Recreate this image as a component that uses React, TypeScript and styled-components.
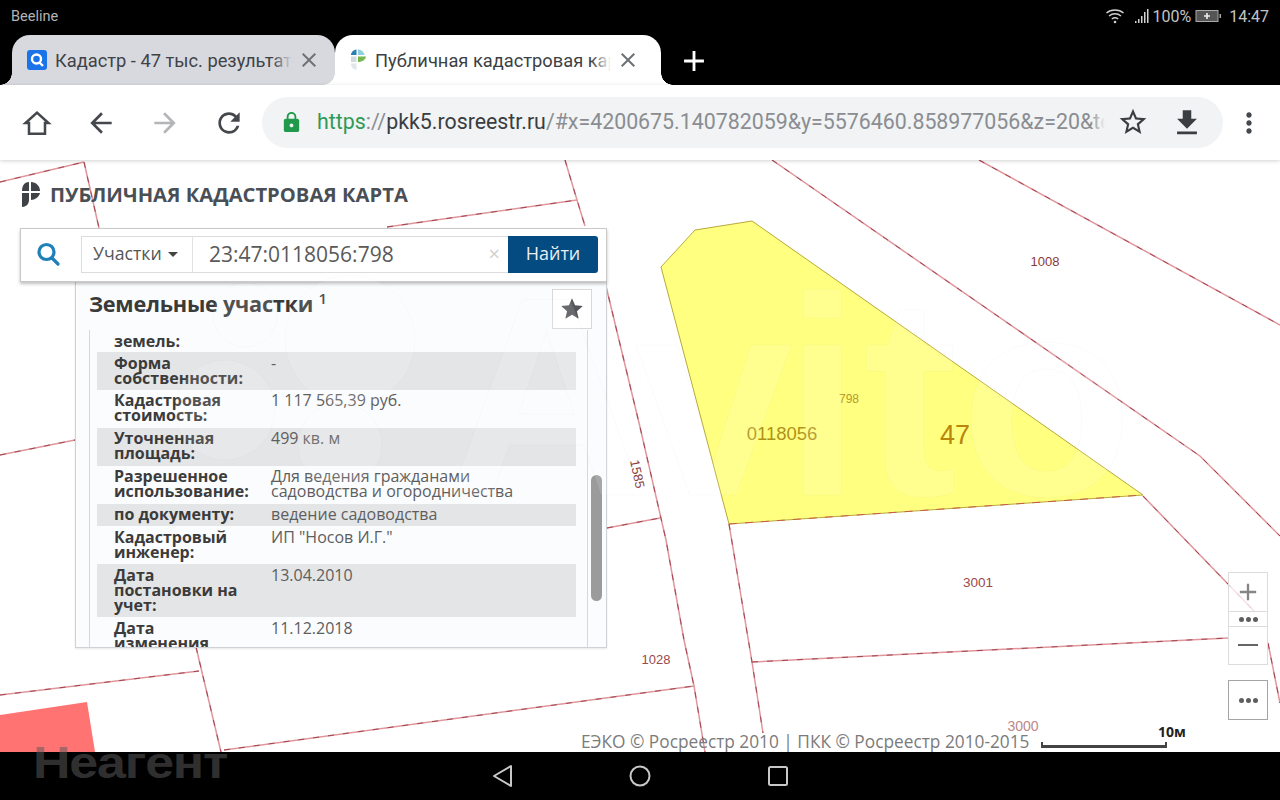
import React from "react";
import styled, { createGlobalStyle } from "styled-components";
import { MdAdd, MdArrowBack, MdArrowForward, MdClose, MdFileDownload, MdLock, MdMoreVert, MdRefresh, MdStar, MdStarBorder } from "react-icons/md";

const Global = createGlobalStyle`
  html, body { margin: 0; padding: 0; background: #000; }
  * { box-sizing: border-box; }
  #root { width: 1280px; height: 800px; overflow: hidden; }
`;

const Screen = styled.div`
  width: 1280px; height: 800px; display: flex; flex-direction: column;
  position: relative; overflow: hidden; font-family: Roboto, "Liberation Sans", sans-serif;
`;
const StatusBar = styled.div`
  height: 35px; flex: none; background: #000; color: #b4b4b4; font-size: 14.5px;
  display: flex; align-items: center; justify-content: space-between; padding: 0 11px 3px;
`;
const StatusRight = styled.div`
  display: flex; align-items: center; color: #c4c4c4; font-size: 16px;
`;
const TabStrip = styled.div`
  height: 50px; flex: none; background: #000; display: flex; padding-left: 12px; position: relative;
`;
const Tab = styled.div<{ $active?: boolean; $w: number }>`
  width: ${p => p.$w}px; flex: none; height: 50px; position: relative;
  background: ${p => (p.$active ? "#fff" : "#d8d9de")};
  border-radius: 18px 18px 0 0;
  display: flex; align-items: center; padding: 0 0 0 15px;
  color: ${p => (p.$active ? "#3c3f44" : "#3f4247")};
  z-index: ${p => (p.$active ? 2 : 1)};
  &::before {
    content: ""; position: absolute; left: -12px; bottom: 0; width: 12px; height: 12px;
    background: radial-gradient(circle at 0 0, transparent 11.5px, ${p => (p.$active ? "#fff" : "#d8d9de")} 12px);
  }
  &::after {
    content: ""; position: absolute; right: -12px; bottom: 0; width: 12px; height: 12px;
    background: radial-gradient(circle at 100% 0, transparent 11.5px, ${p => (p.$active ? "#fff" : "#d8d9de")} 12px);
  }
`;
const TabTitle = styled.div<{ $w: number; $fade: string }>`
  width: ${p => p.$w}px; margin: 2px 0 0 8px; white-space: nowrap; overflow: hidden;
  font-size: 18.3px; position: relative; line-height: 24px;
  &::after {
    content: ""; position: absolute; right: 0; top: 0; bottom: 0; width: 20px;
    background: linear-gradient(90deg, transparent, ${p => p.$fade});
  }
`;
const TabClose = styled.div`
  width: 24px; height: 24px; display: flex; align-items: center; justify-content: center; color: #6e7176; margin-left: 5px;
`;
const NewTab = styled.div`
  margin-left: 16px; margin-top: 9px; color: #fff; height: 34px; width: 34px; z-index: 3;
`;
const Toolbar = styled.div`
  height: 75px; flex: none; background: #fff; display: flex; align-items: center; position: relative; z-index: 5;
  padding: 0 15px 1px 21px; box-shadow: 0 1px 4px rgba(0,0,0,.18);
`;
const ToolButton = styled.div<{ $muted?: boolean; $gap?: number }>`
  width: 32px; height: 32px; flex: none; color: ${p => (p.$muted ? "#b3b5b8" : "#44474b")};
  margin: 2px ${p => p.$gap ?? 32}px 0 0; display: flex; align-items: center; justify-content: center;
`;
const Omnibox = styled.div`
  width: 961px; height: 51px; flex: none; background: #f1f3f4; border-radius: 26px;
  display: flex; align-items: center; padding-left: 18px; margin-right: 10px;
`;
const LockIcon = styled.div`
  width: 23px; height: 23px; color: #1e9a4a; flex: none; margin-right: 14px;
`;
const Url = styled.div`
  width: 788px; flex: none; font-size: 21.35px; white-space: nowrap; overflow: hidden; color: #8a8d91; position: relative; line-height: 28px;
  &::after {
    content: ""; position: absolute; right: 0; top: 0; bottom: 0; width: 14px;
    background: linear-gradient(90deg, rgba(241,243,244,0), #f1f3f4);
  }
`;
const Https = styled.span` color: #2f9a57; `;
const Host = styled.span` color: #3a3d41; `;
const OmniAction = styled.div<{ $ml: number }>`
  width: 32px; height: 32px; flex: none; margin-left: ${p => p.$ml}px; color: #3a3d41;
`;
const MapArea = styled.div`
  flex: 1; position: relative; background: #fff; overflow: hidden; font-family: "Open Sans", "Liberation Sans", sans-serif;
`;
const MapSvg = styled.svg`
  position: absolute; left: 0; top: 0; display: block;
`;
const Brand = styled.div`
  position: absolute; left: 21px; top: 20px; display: flex; align-items: center; gap: 9px;
  color: #4a4f55; font-weight: 700; font-size: 20.2px; line-height: 28px;
`;
const SearchStack = styled.div`
  position: absolute; left: 20px; top: 68px; width: 587px; display: flex; flex-direction: column; align-items: flex-end;
`;
const SearchBar = styled.div`
  width: 587px; height: 54px; background: #fff; border: 1px solid #c9c9c9; box-shadow: 0 2px 3px rgba(0,0,0,.25);
  display: flex; align-items: center; padding: 0 0 2px 13px; position: relative; z-index: 2;
`;
const SearchGlyph = styled.div`
  width: 28px; height: 28px; color: #1f7fb8; margin-right: 19px; flex: none;
`;
const Dropdown = styled.div`
  width: 112px; height: 37px; flex: none; border: 1px solid #dcdcdc; border-right-color: #e2e2e2;
  display: flex; align-items: center; padding: 0 0 2px 11px; gap: 6px; font-size: 17.7px; color: #555;
`;
const Caret = styled.span`
  width: 0; height: 0; border-left: 5.5px solid transparent; border-right: 5.5px solid transparent; border-top: 5.5px solid #444; margin-top: 2px;
`;
const Field = styled.div`
  width: 315px; height: 37px; flex: none; border: 1px solid #dcdcdc; border-width: 1px 0; display: flex; align-items: center;
  padding: 0 0 0 16px; font-size: 21px; color: #5a5a5a; justify-content: space-between;
`;
const Clear = styled.span`
  color: #d0d0d0; font-size: 20px; margin-right: 8px; line-height: 20px;
`;
const Submit = styled.div`
  width: 90px; height: 37px; flex: none; background: #034b80; border-radius: 0 3px 3px 0; color: #e9eef3;
  font-size: 18px; display: flex; align-items: center; justify-content: center; padding-bottom: 2px;
`;
const Results = styled.div`
  width: 532px; height: 366px; background: #fbfcfe; border: 1px solid #cfd1d4; border-top: none; position: relative;
  display: flex; flex-direction: column; padding: 0 0 0 13px; box-shadow: 0 1px 2px rgba(0,0,0,.1);
`;
const ResultsHead = styled.div`
  height: 54px; margin-bottom: -6px; flex: none; display: flex; align-items: flex-start; justify-content: space-between; padding: 7px 14px 0 0;
`;
const ResultsTitle = styled.div`
  font-size: 21.7px; font-weight: 700; letter-spacing: -.25px; color: #3a3a3a; line-height: 30px;
  sup { font-size: 15px; line-height: 0; vertical-align: 8px; margin-left: 0; font-weight: 600; }
`;
const FavButton = styled.div`
  width: 40px; height: 40px; border: 1px solid #d8d8d8; background: #fff; color: #55565b; display: flex; align-items: center; justify-content: center;
  position: relative; z-index: 1;
`;
const ListFrame = styled.div`
  width: 499px; flex: 1; min-height: 0; border: 1px solid #d6d8db; border-width: 0 1px; overflow: hidden; padding: 0 11px 0 7px;
`;
const Row = styled.div<{ $shade?: boolean }>`
  display: grid; grid-template-columns: 157px 1fr; padding: 3.5px 0 4.4px 17px;
  background: ${p => (p.$shade ? "#e4e5e6" : "transparent")};
  font-size: 16px; line-height: 15px;
`;
const FirstRow = styled(Row)`
  padding-bottom: 3.5px;
`;
const Label = styled.div` font-weight: 700; color: #3b3b3b; `;
const Value = styled.div` color: #5e5e5e; `;
const Scrollbar = styled.div`
  position: absolute; right: 4px; top: 193px; width: 11px; height: 126px; background: #9b9b9b; border-radius: 6px;
`;
const ZoomGroup = styled.div`
  position: absolute; left: 1228px; top: 413px; width: 40px; display: flex; flex-direction: column;
`;
const ZoomButton = styled.div<{ $h: number; $strong?: boolean }>`
  height: ${p => p.$h}px; border: 1px solid ${p => (p.$strong ? "#a4a4a4" : "#dcdcdc")}; margin-top: -1px;
  background: rgba(255,255,255,.72); color: #858585; display: flex; align-items: center; justify-content: center;
`;
const Dots = styled.div`
  display: flex; gap: 2px;
  i { width: 5px; height: 5px; border-radius: 50%; background: #5e5e5e; display: block; }
`;
const DotsButton = styled(ZoomButton)`
  margin-top: 15px;
`;
const Attribution = styled.div`
  position: absolute; left: 581px; bottom: 0; height: 22px; display: flex; align-items: center;
  font-size: 17.3px; color: #7b7b7b; white-space: nowrap;
`;
const ScaleBar = styled.div`
  position: absolute; left: 1041px; top: 582px; width: 126px; height: 6px; border: 2px solid #444; border-top: none;
  border-bottom-width: 3px;
`;
const ScaleLabel = styled.div`
  position: absolute; left: 1158px; top: 563px; font-size: 14px; font-weight: 700; color: #222; line-height: 18px;
`;
const NavBar = styled.div`
  height: 48px; flex: none; background: #000; display: flex; align-items: center; justify-content: center; gap: 100px;
`;
const NavIcon = styled.svg` width: 38px; height: 38px; display: block; `;
const Neagent = styled.div`
  position: absolute; left: 33px; top: 738px; font-family: "Liberation Sans", sans-serif; font-weight: 700; font-size: 44px;
  color: rgba(90,90,90,.55); letter-spacing: -1px; line-height: 50px; transform: scaleX(1.18); transform-origin: left center; z-index: 9;
`;
const Watermark = styled.svg`
  position: absolute; left: 0; top: 0; pointer-events: none; z-index: 8;
`;

const red = "#e0969b";
const parcelLines: number[][][] = [
  [[0, 22], [84, 2]],
  [[84, 2], [99, 68]],
  [[565, 0], [577, 40], [585, 66]],
  [[387, 67], [577, 40]],
  [[605, 122], [640, 267], [666, 380], [684, 480], [694, 526], [705, 592]],
  [[729, 364], [752, 502], [763, 573]],
  [[772, 0], [1200, 296], [1280, 376]],
  [[979, 0], [1280, 165]],
  [[1143, 336], [1255, 452]],
  [[752, 502], [1228, 478]],
  [[1268, 483], [1280, 543]],
  [[0, 295], [75, 280]],
  [[607, 368], [660, 358]],
  [[0, 535], [199, 511]],
  [[196, 487], [221, 592]],
  [[224, 590], [694, 526]],
];

const labels: { x: number; y: number; t: string; s: number; c: string; r?: number }[] = [
  { x: 1045, y: 106, t: "1008", s: 13, c: "#8a3a3a" },
  { x: 849, y: 243, t: "798", s: 12, c: "#b59a2e" },
  { x: 782, y: 280, t: "0118056", s: 18.5, c: "#b0921a" },
  { x: 955, y: 284, t: "47", s: 27, c: "#b8860b" },
  { x: 978, y: 427, t: "3001", s: 13.5, c: "#9a4a4a" },
  { x: 656, y: 504, t: "1028", s: 13, c: "#9a4a4a" },
  { x: 1023, y: 571, t: "3000", s: 14, c: "#bb8888" },
  { x: 633, y: 315, t: "1585", s: 13, c: "#8a3a3a", r: 78 },
];

const rows: { l: React.ReactNode; v: React.ReactNode; shade?: boolean }[] = [
  { l: <>Форма<br />собственности:</>, v: "-", shade: true },
  { l: <>Кадастровая<br />стоимость:</>, v: "1 117 565,39 руб." },
  { l: <>Уточненная<br />площадь:</>, v: "499 кв. м", shade: true },
  { l: <>Разрешенное<br />использование:</>, v: <>Для ведения гражданами<br />садоводства и огородничества</> },
  { l: "по документу:", v: "ведение садоводства", shade: true },
  { l: <>Кадастровый<br />инженер:</>, v: 'ИП "Носов И.Г."' },
  { l: <>Дата<br />постановки на<br />учет:</>, v: "13.04.2010", shade: true },
  { l: <>Дата<br />изменения<br />сведений:</>, v: "11.12.2018" },
];

const ThreeDots = () => <Dots><i /><i /><i /></Dots>;

export default function App() {
  return (
    <Screen>
      <Global />
      <StatusBar>
        <span>Beeline</span>
        <StatusRight>
          <svg width="20" height="18" viewBox="0 0 20 18" style={{ marginRight: 9 }} fill="none" stroke="#d0d0d0" strokeWidth="1.3">
            <path d="M1.5 6C6 2 14 2 18.5 6" /><path d="M4 9c3.500-3 8.500-3 12 0" /><path d="M6.800 12c2-1.600 4.400-1.600 6.400 0" />
            <circle cx="10" cy="15" r="1.300" fill="#d0d0d0" stroke="none" />
          </svg>
          <svg width="18" height="16" viewBox="0 0 18 16" fill="#d0d0d0">
            <rect x="1" y="13" width="1.500" height="2" /><rect x="4" y="11" width="1.500" height="4" /><rect x="7" y="8" width="1.500" height="7" /><rect x="10" y="4" width="1.500" height="11" /><rect x="13" y="1" width="1.500" height="14" />
          </svg>
          <span>100%</span>
          <svg width="28" height="14" viewBox="0 0 28 14" style={{ margin: "0 6px 0 4px" }}>
            <rect x="1" y="1.500" width="22" height="11" fill="#555" stroke="#aaa" />
            <rect x="24.500" y="5" width="1.500" height="4" fill="#aaa" />
            <path d="M12 4v6M9 7h6" stroke="#eee" strokeWidth="1.600" />
          </svg>
          <span>14:47</span>
        </StatusRight>
      </StatusBar>
      <TabStrip>
        <Tab $w={323}>
          <svg width="20" height="20" viewBox="0 0 20 20" style={{ flex: "none" }}>
            <rect width="20" height="20" rx="3" fill="#1a73e8" />
            <circle cx="9.500" cy="9" r="4.500" fill="none" stroke="#fff" strokeWidth="2.400" />
            <path d="M12.500 12.500l3.500 3.500" stroke="#fff" strokeWidth="2.400" />
          </svg>
          <TabTitle $w={237} $fade="#d8d9de">Кадастр - 47 тыс. результатов</TabTitle>
          <TabClose><MdClose size={24} /></TabClose>
        </Tab>
        <Tab $active $w={326}>
          <svg width="18" height="22" viewBox="0 0 18 22" style={{ flex: "none", marginLeft: -1 }}>
            <path d="M2 6c0-2.500 2-5 5.500-5.500V6z" fill="#2a7fb0" />
            <path d="M9 .5c3.500 0 6 2.500 6.500 5.500H9z" fill="#8fd0de" />
            <path d="M9 7.500h8c-.5 3-3.500 5.500-8 5.500z" fill="#74b84e" />
            <path d="M2 7.500h5.500V13H2z" fill="#d3dade" />
            <path d="M2 14.500h5.500V21C4.500 20.500 2 18 2 14.500z" fill="#e2e6e8" />
          </svg>
          <TabTitle $w={236} $fade="#ffffff">Публичная кадастровая карта</TabTitle>
          <TabClose><MdClose size={24} /></TabClose>
        </Tab>
        <NewTab><MdAdd size={34} /></NewTab>
      </TabStrip>
      <Toolbar>
        <ToolButton>
          <svg width="32" height="32" viewBox="0 0 24 24" fill="none" stroke="currentColor" strokeWidth="1.900" strokeLinejoin="miter">
            <path d="M12 4.200L3.400 12H6v8h12v-8h2.600z" />
          </svg>
        </ToolButton>
        <ToolButton><MdArrowBack size={32} /></ToolButton>
        <ToolButton $muted><MdArrowForward size={32} /></ToolButton>
        <ToolButton $gap={17}><MdRefresh size={32} /></ToolButton>
        <Omnibox>
          <LockIcon><MdLock size={23} /></LockIcon>
          <Url><Https>https</Https>://<Host>pkk5.rosreestr.ru</Host>/#x=4200675.140782059&amp;y=5576460.858977056&amp;z=20&amp;text=23:47</Url>
          <OmniAction $ml={12}><MdStarBorder size={32} /></OmniAction>
          <OmniAction $ml={21}><MdFileDownload size={34} /></OmniAction>
        </Omnibox>
        <ToolButton $gap={0}><MdMoreVert size={32} /></ToolButton>
      </Toolbar>
      <MapArea>
        <MapSvg width="1280" height="592" viewBox="0 0 1280 592">
          <polygon points="0,555 87,542 95,592 0,592" fill="#ff7373" />
          <polygon points="661,107 695,70 752,61 1143,335 729,364" fill="#ffff80" stroke="#b9a93a" strokeWidth="1" />
          {parcelLines.map((l, i) => (
            <g key={i}>
              <polyline points={l.map(p => p.join(",")).join(" ")} fill="none" stroke={red} strokeWidth="1.500" />
              <polyline points={l.map(p => p.join(",")).join(" ")} fill="none" stroke="#9a3a4a" strokeWidth=".9" strokeDasharray="6 9" />
            </g>
          ))}
          <polyline points="729,364 1143,335" fill="none" stroke="#c85a4a" strokeWidth="1" strokeDasharray="8 8" />
          {labels.map(t => (
            <text key={t.t} x={t.x} y={t.y} textAnchor="middle" fontFamily="'Liberation Sans', sans-serif" fontSize={t.s} fill={t.c}
              transform={t.r ? `rotate(${t.r} ${t.x} ${t.y})` : undefined}>{t.t}</text>
          ))}
        </MapSvg>
        <Brand>
          <svg width="20" height="27" viewBox="0 0 20 27" fill="#3f4347">
            <path d="M1 10C1 4 4 1 8 1v9z" />
            <path d="M10 1c5 0 9 4 9 9h-9z" />
            <path d="M10 12h9c-1 4-5 7-9 7z" />
            <path d="M1 12h7v7c0 3-2 7-7 7z" />
          </svg>
          ПУБЛИЧНАЯ КАДАСТРОВАЯ КАРТА
        </Brand>
        <SearchStack>
          <SearchBar>
            <SearchGlyph>
              <svg width="28" height="28" viewBox="0 0 28 28" fill="none" stroke="currentColor" strokeWidth="3.200">
                <circle cx="12.500" cy="12" r="7.500" /><path d="M18 18l6 6" strokeLinecap="round" />
              </svg>
            </SearchGlyph>
            <Dropdown>Участки <Caret /></Dropdown>
            <Field>23:47:0118056:798<Clear>×</Clear></Field>
            <Submit>Найти</Submit>
          </SearchBar>
          <Results>
            <ResultsHead>
              <ResultsTitle>Земельные участки <sup>1</sup></ResultsTitle>
              <FavButton><MdStar size={26} /></FavButton>
            </ResultsHead>
            <ListFrame>
              <FirstRow><Label>земель:</Label><Value /></FirstRow>
              {rows.map((r, i) => (
                <Row key={i} $shade={r.shade}><Label>{r.l}</Label><Value>{r.v}</Value></Row>
              ))}
            </ListFrame>
            <Scrollbar />
          </Results>
        </SearchStack>
        <ZoomGroup>
          <ZoomButton $h={40}><MdAdd size={28} /></ZoomButton>
          <ZoomButton $h={16}><ThreeDots /></ZoomButton>
          <ZoomButton $h={39}><svg width="20" height="3"><rect width="20" height="2" fill="#666" /></svg></ZoomButton>
          <DotsButton $h={40} $strong><ThreeDots /></DotsButton>
        </ZoomGroup>
        <Attribution>ЕЭКО © Росреестр 2010 | ПКК © Росреестр 2010-2015</Attribution>
        <ScaleBar />
        <ScaleLabel>10м</ScaleLabel>
      </MapArea>
      <NavBar>
        <NavIcon viewBox="0 0 38 38"><path d="M28 9v20L11 19z" fill="none" stroke="#c8c8c8" strokeWidth="2" strokeLinejoin="round" /></NavIcon>
        <NavIcon viewBox="0 0 38 38"><circle cx="19" cy="19" r="9.500" fill="none" stroke="#c8c8c8" strokeWidth="2" /></NavIcon>
        <NavIcon viewBox="0 0 38 38"><rect x="10" y="10" width="18" height="18" rx="1.500" fill="none" stroke="#c8c8c8" strokeWidth="2" /></NavIcon>
      </NavBar>
      <Neagent>Неагент</Neagent>
      <Watermark width="1280" height="800" viewBox="0 0 1280 800" fill="#fff" fillOpacity=".12" stroke="#000" strokeOpacity=".02">
        <clipPath id="wm"><rect x="0" y="160" width="1280" height="592" /></clipPath>
        <g clipPath="url(#wm)">
          <circle cx="350" cy="340" r="65" />
          <circle cx="245" cy="315" r="32" />
          <circle cx="340" cy="445" r="42" />
          <circle cx="225" cy="410" r="50" />
          <text x="444 635 783 863 960" y="495" fontFamily="'Liberation Sans', sans-serif" fontWeight="700" fontSize="284">Avito</text>
        </g>
      </Watermark>
    </Screen>
  );
}
